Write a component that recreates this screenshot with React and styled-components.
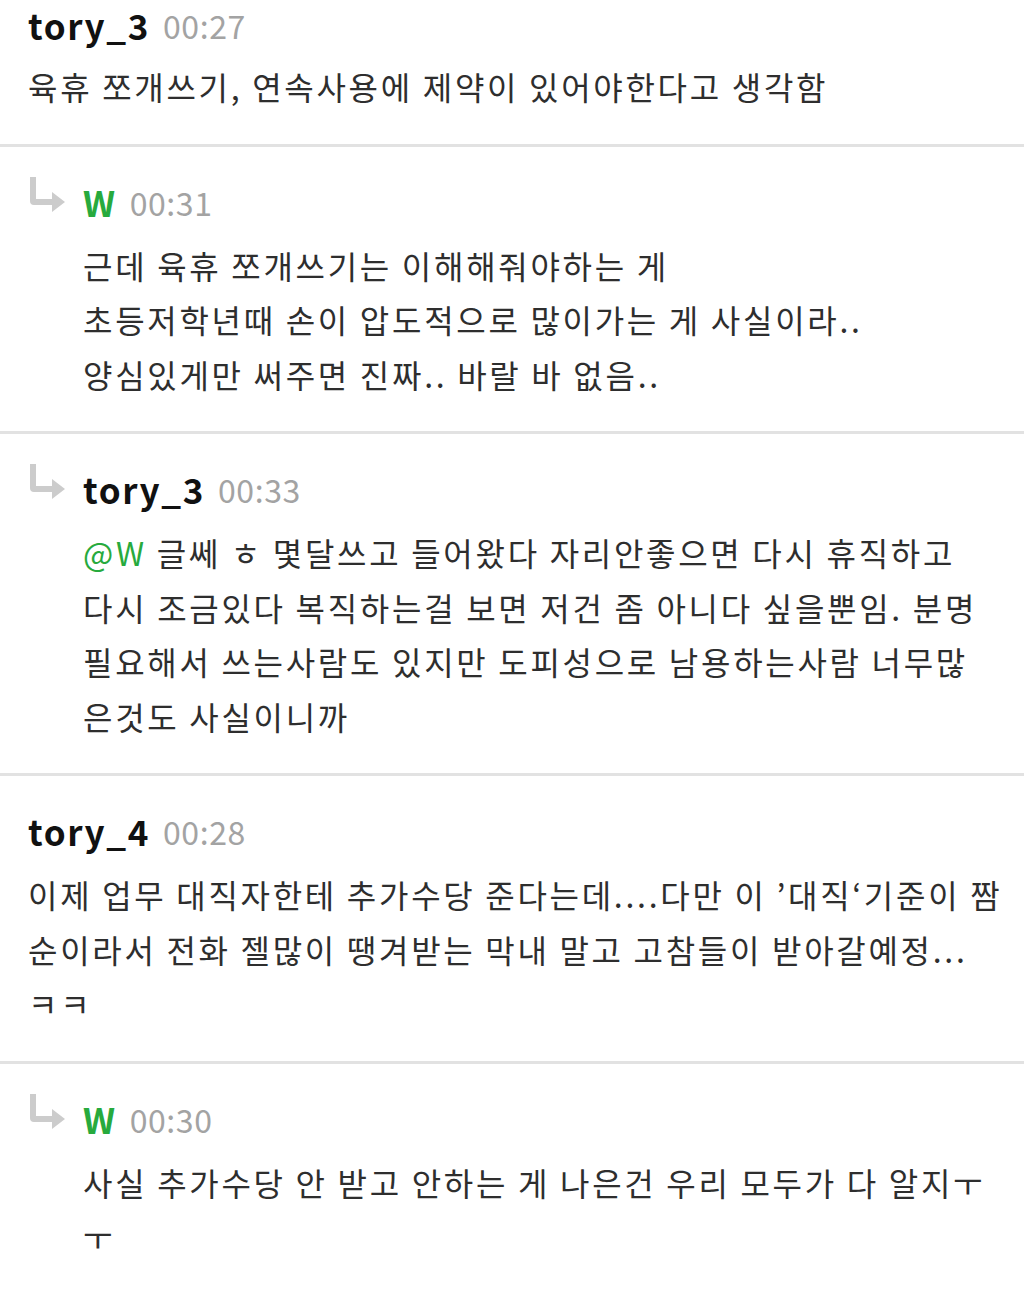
import React from "react";
import styled, { createGlobalStyle } from "styled-components";

const Global = createGlobalStyle`
  html, body { margin: 0; padding: 0; background: #fff; }
  body { font-family: "Noto Sans CJK KR", "Noto Sans", sans-serif; }
`;

const List = styled.div`
  width: 1024px;
`;

const Item = styled.div`
  border-bottom: ${(p) => (p.$last ? "none" : "3px solid #e2e2e2")};
  padding: ${(p) => (p.$first ? "0" : "28px")} 0 30px ${(p) => (p.$reply ? "30px" : "28px")};
  display: flex;
  align-items: flex-start;
`;

const ArrowBox = styled.div`
  width: 53px;
  flex: none;
  padding-top: 2px;
`;

const Content = styled.div`
  flex: 1;
  min-width: 0;
`;

const Header = styled.div`
  height: ${(p) => (p.$first ? "50px" : "54px")};
  display: flex;
  align-items: center;
  gap: 13px;
  white-space: nowrap;
`;

const Name = styled.span`
  font-family: "Noto Sans CJK KR", "Noto Sans", sans-serif;
  font-weight: 700;
  font-size: 35px;
  line-height: 46px;
  letter-spacing: 1.6px;
  color: ${(p) => (p.$green ? "#27aa3d" : "#111")};
`;

const Time = styled.span`
  font-family: "Noto Sans CJK KR", "Noto Sans", sans-serif;
  font-size: 32px;
  line-height: 46px;
  letter-spacing: 0.6px;
  color: #a3a3a3;
`;

const Body = styled.div`
  margin-top: 9px;
  font-size: 32px;
  letter-spacing: 2.7px;
  line-height: 54.5px;
  color: #2e2e2e;
  white-space: nowrap;
`;

const Mention = styled.span`
  color: #27aa3d;
`;

const ReplyArrow = () => (
  <svg width="36" height="36" viewBox="0 0 36 36">
    <path d="M0 0 H6 V22 H24 V28 H4 Q0 28 0 24 Z" fill="#cccccc" />
    <path d="M22 15 L35 25 L22 35 Z" fill="#cccccc" />
  </svg>
);

const comments = [
  {
    name: "tory_3",
    time: "00:27",
    lines: ["육휴 쪼개쓰기, 연속사용에 제약이 있어야한다고 생각함"],
  },
  {
    reply: true,
    green: true,
    name: "W",
    time: "00:31",
    lines: [
      "근데 육휴 쪼개쓰기는 이해해줘야하는 게",
      "초등저학년때 손이 압도적으로 많이가는 게 사실이라..",
      "양심있게만 써주면 진짜.. 바랄 바 없음..",
    ],
  },
  {
    reply: true,
    name: "tory_3",
    time: "00:33",
    mention: "@W",
    lines: [
      " 글쎄 ㅎ 몇달쓰고 들어왔다 자리안좋으면 다시 휴직하고",
      "다시 조금있다 복직하는걸 보면 저건 좀 아니다 싶을뿐임. 분명",
      "필요해서 쓰는사람도 있지만 도피성으로 남용하는사람 너무많",
      "은것도 사실이니까",
    ],
  },
  {
    name: "tory_4",
    time: "00:28",
    lines: [
      "이제 업무 대직자한테 추가수당 준다는데....다만 이 ’대직‘기준이 짬",
      "순이라서 전화 젤많이 땡겨받는 막내 말고 고참들이 받아갈예정...",
      "ㅋㅋ",
    ],
  },
  {
    reply: true,
    green: true,
    name: "W",
    time: "00:30",
    lines: ["사실 추가수당 안 받고 안하는 게 나은건 우리 모두가 다 알지ㅜ", "ㅜ"],
  },
];

export default function App() {
  return (
    <>
      <Global />
      <List>
        {comments.map((c, i) => (
          <Item key={i} $reply={c.reply} $first={i === 0} $last={i === comments.length - 1}>
            {c.reply && (
              <ArrowBox>
                <ReplyArrow />
              </ArrowBox>
            )}
            <Content>
              <Header $first={i === 0}>
                <Name $green={c.green}>{c.name}</Name>
                <Time>{c.time}</Time>
              </Header>
              <Body>
                {c.lines.map((l, j) => (
                  <div key={j}>
                    {j === 0 && c.mention && <Mention>{c.mention}</Mention>}
                    {l}
                  </div>
                ))}
              </Body>
            </Content>
          </Item>
        ))}
      </List>
    </>
  );
}
